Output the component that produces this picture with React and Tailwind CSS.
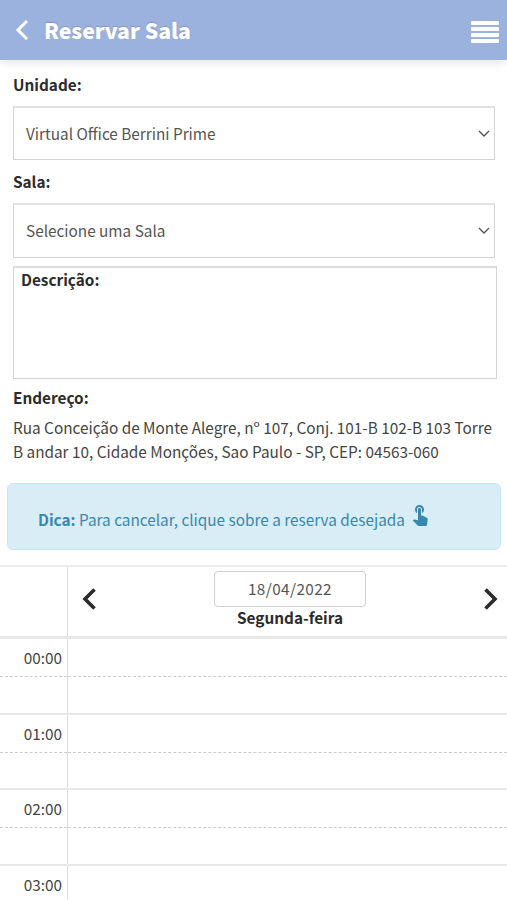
import React from 'react';
import { MdTouchApp } from 'react-icons/md';

const HOURS = ['00:00', '01:00', '02:00', '03:00'];

const Chevron = ({ className, d, strokeWidth, viewBox }) => (
  <svg className={className} viewBox={viewBox} fill="none" stroke="currentColor" strokeWidth={strokeWidth}>
    <path d={d} />
  </svg>
);

const Header = () => (
  <header className="flex h-[60px] items-center justify-between bg-[#9bb1de] pl-[15px] pr-2 text-white shadow-[0_1px_10px_rgba(0,0,0,0.15)]">
    <div className="flex items-center">
      <Chevron className="h-5 w-[14px]" viewBox="0 0 14 20" d="M12 1 L3 10 L12 19" strokeWidth={3} />
      <h1 className="ml-[15px] text-[21.2px] font-black leading-[30px] [text-shadow:0_-1px_1px_rgba(0,0,0,0.15)]">Reservar Sala</h1>
    </div>
    <div className="mt-1 flex w-[28px] flex-col gap-[2px]">
      <span className="h-1 rounded-[1px] bg-white"></span>
      <span className="h-1 rounded-[1px] bg-white"></span>
      <span className="h-1 rounded-[1px] bg-white"></span>
      <span className="h-1 rounded-[1px] bg-white"></span>
    </div>
  </header>
);

const SelectField = ({ label, value }) => (
  <div>
    <label className="block h-[43px] pt-[9px] font-bold leading-6 text-[#2b2b2b]">{label}</label>
    <div className="flex h-[54.5px] w-[482px] items-center justify-between border border-t-2 border-[#d4d4d4] border-t-[#e2e2e2] pl-3 pr-1 text-[#555]">
      <span className="-mt-px">{value}</span>
      <Chevron className="h-[7px] w-3" viewBox="0 0 12 7" d="M1 1 L6 6 L11 1" strokeWidth={1.4} />
    </div>
  </div>
);

const Calendar = () => (
  <section className="border-t-2 border-[#ececec]">
    <div className="flex h-[69px]">
      <div className="w-[68px] shrink-0 border-r border-[#dedede]"></div>
      <div className="flex flex-1 justify-between pl-[14px] pr-[9px] text-[#2b2b2b]">
        <Chevron className="mt-[21px] h-[22px] w-[14px]" viewBox="0 0 14 22" d="M12.5 1.5 L3 11 L12.5 20.5" strokeWidth={3.6} />
        <div className="flex flex-col items-center pt-1">
          <div className="flex h-9 w-[152px] items-center justify-center rounded border-[1.5px] border-[#cfcfcf] pb-px tracking-[0.4px] text-[#555]">18/04/2022</div>
          <span className="font-bold leading-[21px]">Segunda-feira</span>
        </div>
        <Chevron className="mt-[21px] h-[22px] w-[14px]" viewBox="0 0 14 22" d="M1.5 1.5 L11 11 L1.5 20.5" strokeWidth={3.6} />
      </div>
    </div>
    <div className="h-[3px] bg-[#e8e8e8]"></div>
    {HOURS.map((hour) => (
      <div key={hour} className="flex h-[75.7px] border-b-2 border-[#e8e8e8]">
        <div className="w-[68px] shrink-0 border-r border-[#dedede]">
          <div className="flex h-[38px] items-center justify-end border-b border-dashed border-[#ccc] pb-px pr-[5px] text-[#444]">{hour}</div>
        </div>
        <div className="flex-1">
          <div className="h-[38px] border-b border-dashed border-[#ccc]"></div>
        </div>
      </div>
    ))}
  </section>
);

export default function App() {
  return (
    <div className="h-[900px] overflow-hidden bg-white font-['Noto_Sans_CJK_JP',sans-serif] text-[15.33px] leading-6 text-[#444]">
      <Header />
      <main>
        <div className="px-[13px]">
          <div className="pt-[2.5px]">
            <SelectField label="Unidade:" value="Virtual Office Berrini Prime" />
          </div>
          <SelectField label="Sala:" value="Selecione uma Sala" />
          <div className="mt-[8.5px] h-[113px] w-[484px] border border-t-2 border-[#d4d4d4] border-t-[#dedede] px-[7px] font-bold leading-[23px] text-[#2b2b2b]">Descrição:</div>
          <div className="mt-[6px] font-bold text-[#2b2b2b]">Endereço:</div>
          <p className="mt-[6px] whitespace-nowrap leading-[24.4px]">
            Rua Conceição de Monte Alegre, nº 107, Conj. 101-B 102-B 103 Torre
            <br />
            B andar 10, Cidade Monções, Sao Paulo - SP, CEP: 04563-060
          </p>
        </div>
        <div className="mb-[15px] ml-[7px] mt-[19px] flex h-[67px] w-[494px] items-center rounded-md border border-[#c4e8ef] bg-[#d9edf7] pl-[30px] pt-[5px] text-[#3a87ad]">
          <span><b>Dica:</b> Para cancelar, clique sobre a reserva desejada</span>
          <MdTouchApp className="mb-[10px] ml-[3px] size-6" />
        </div>
        <Calendar />
      </main>
    </div>
  );
}
